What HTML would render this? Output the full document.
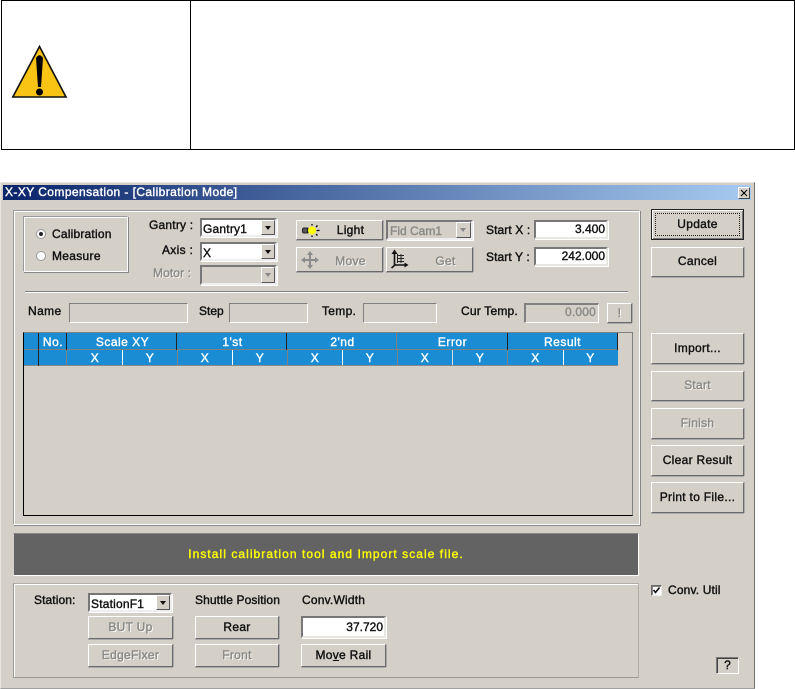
<!DOCTYPE html>
<html><head><meta charset="utf-8"><title>X-XY Compensation</title>
<style>
html,body{margin:0;padding:0;background:#fff;width:795px;height:689px;overflow:hidden}
body{position:relative;font:normal 12px "Liberation Sans",sans-serif;-webkit-text-stroke:.4px currentColor;color:#111}
div,span.a{position:absolute;box-sizing:border-box}
.t{white-space:nowrap;letter-spacing:.3px;line-height:14px;height:14px}
.d{color:#8a8a86;text-shadow:1px 1px 0 #fff}
.b{background:#d4d0c8;border:1px solid;border-color:#fff #6a6a6a #6a6a6a #fff;box-shadow:0 1px 0 #aaa,1px 0 0 #aaa;display:flex;align-items:center;justify-content:center;letter-spacing:.3px;white-space:nowrap;padding-bottom:1px}
.s{background:#d4d0c8;border:1px solid;border-color:#808080 #fff #fff #808080}
.w{background:#fff;border:2px solid;border-color:#777 #e8e6e0 #e8e6e0 #777;box-shadow:1px 1px 0 #fff;text-align:right;padding-right:1px;line-height:15px;letter-spacing:0;color:#111}
.c{background:#fff;border:2px solid;border-color:#777 #eee #eee #777;box-shadow:1px 1px 0 #fff;line-height:18px;padding-left:1px;letter-spacing:.2px;white-space:nowrap}
.ar{right:0;top:0;bottom:0;width:14px;background:#d4d0c8;border:1px solid;border-color:#fff #555 #555 #fff}
.ar:after{content:"";position:absolute;left:3px;top:5px;border:3px solid transparent;border-top:4px solid #111;border-bottom:0}
.dis{background:#d4d0c8}
.dis .ar:after{border-top-color:#888}
.g{border:1px solid;border-color:#999 #fff #fff #999;box-shadow:inset 1px 1px 0 #fff,1px 1px 0 #888}
.h{background:#1a8cd4;color:#fff;display:flex;align-items:center;justify-content:center;letter-spacing:.5px;line-height:1}
.l{background:#808080}
</style></head><body>

<!-- top table -->
<div style="left:1px;top:0;width:794px;height:150px;border:1px solid #000"></div>
<div style="left:190px;top:0;width:1px;height:150px;background:#000"></div>
<svg style="position:absolute;left:11px;top:44px" width="58" height="55" viewBox="0 0 58 55">
<path d="M28.5 2.5 L1.8 53 H55 Z" fill="#fac414" stroke="#111" stroke-width="1.6" stroke-linejoin="miter"/>
<path d="M25 14 Q28.5 8.5 32 14 L30 43 H27 Z" fill="#000"/>
<circle cx="28.5" cy="48" r="3.5" fill="#000"/>
</svg>

<!-- window -->
<div style="left:0;top:182px;width:755px;height:507px;background:#d4d0c8;border:1px solid;border-color:#e6e4de #707070 #a0a0a0 #e6e4de"></div>
<div style="left:3px;top:185px;width:748px;height:15px;background:linear-gradient(90deg,#0a246a 0%,#a6caf0 100%)"></div>
<div class="t" style="left:5px;top:185px;color:#fff;letter-spacing:.42px">X-XY Compensation - [Calibration Mode]</div>
<div class="b" style="left:738px;top:187px;width:12px;height:12px;color:#000;line-height:1;border-color:#fff #444 #444 #fff;box-shadow:none;padding:0">
<svg width="8" height="8" viewBox="0 0 8 8"><path d="M1 1L7 7M7 1L1 7" stroke="#000" stroke-width="1.2"/></svg></div>

<!-- main group -->
<div class="g" style="left:13px;top:210px;width:627px;height:315px"></div>

<!-- radios group -->
<div class="g" style="left:23px;top:216px;width:105px;height:56px"></div>
<svg style="position:absolute;left:35px;top:228px" width="12" height="36" viewBox="0 0 12 36">
<circle cx="6" cy="6" r="4.5" fill="#fff" stroke="#999"/><circle cx="6" cy="6" r="2" fill="#222"/>
<circle cx="6" cy="28" r="4.5" fill="#fff" stroke="#999"/>
</svg>
<div class="t" style="left:52px;top:227px;letter-spacing:.2px">Calibration</div>
<div class="t" style="left:52px;top:249px;letter-spacing:.3px">Measure</div>

<div class="t" style="left:149px;top:218px;letter-spacing:.2px">Gantry :</div>
<div class="t" style="left:162px;top:243px">Axis :</div>
<div class="t d" style="left:153px;top:266px;letter-spacing:.1px">Motor :</div>

<div class="c" style="left:200px;top:218px;width:77px;height:19px">Gantry1<div class="ar"></div></div>
<div class="c" style="left:200px;top:242px;width:77px;height:19px">X<div class="ar"></div></div>
<div class="c dis" style="left:200px;top:265px;width:77px;height:20px"><div class="ar"></div></div>

<div class="b" style="left:296px;top:220px;width:87px;height:20px;padding:0 0 0 22px">Light</div>
<svg style="position:absolute;left:301px;top:224px" width="19" height="13" viewBox="0 0 19 13">
<rect x="1" y="3.5" width="7" height="6" rx="2" fill="#222"/>
<path d="M3 4.5v4M5 4.5v4" stroke="#bbb" stroke-width=".7"/>
<path d="M11 1.5v-1.5M15 3l1.5-1.5M15.5 6.5h3M15 10l1.5 1.5M11 11.5v1.5" stroke="#000" stroke-width="1.3"/>
<circle cx="11" cy="6.5" r="4" fill="#ff0"/>
</svg>
<div class="c dis" style="left:386px;top:220px;width:87px;height:20px;color:#8a8a86;letter-spacing:0;padding-left:2px">Fid Cam1<div class="ar" style="width:15px"></div></div>
<div class="b d" style="left:296px;top:247px;width:87px;height:25px;padding:2px 0 0 22px">Move</div>
<svg style="position:absolute;left:300px;top:250px" width="20" height="20" viewBox="0 0 20 20">
<path d="M10 1L7 5H9V9H5V7L1 10L5 13V11H9V15H7L10 19L13 15H11V11H15V13L19 10L15 7V9H11V5H13Z" fill="#8c8c8c"/>
</svg>
<div class="b d" style="left:386px;top:247px;width:87px;height:25px;padding:2px 0 0 32px">Get</div>
<svg style="position:absolute;left:390px;top:249px" width="20" height="21" viewBox="0 0 20 21">
<path d="M4.5 3V17M1.5 19L5 16H16" fill="none" stroke="#111" stroke-width="1.6"/>
<path d="M4.5 0.5L1.5 5H7.5ZM18.5 16L14.5 13.5V18.5Z" fill="#111"/>
<path d="M7 6.5H14M7 9.5H14M7 12.5H14M7.5 5V14M11 5V14" stroke="#222" stroke-width="1" fill="none"/>
</svg>

<div class="t" style="left:486px;top:223px;letter-spacing:.1px">Start X :</div>
<div class="t" style="left:486px;top:250px;letter-spacing:.1px">Start Y :</div>
<div class="w" style="left:534px;top:220px;width:74px;height:19px">3.400</div>
<div class="w" style="left:534px;top:247px;width:74px;height:19px">242.000</div>

<div style="left:25px;top:291px;width:603px;height:1px;background:#808080"></div>
<div style="left:25px;top:292px;width:603px;height:1px;background:#fff"></div>

<div class="t" style="left:28px;top:304px;letter-spacing:.4px">Name</div>
<div class="s" style="left:69px;top:303px;width:119px;height:20px"></div>
<div class="t" style="left:199px;top:304px;letter-spacing:0">Step</div>
<div class="s" style="left:229px;top:303px;width:79px;height:20px"></div>
<div class="t" style="left:322px;top:304px">Temp.</div>
<div class="s" style="left:363px;top:303px;width:74px;height:20px"></div>
<div class="t" style="left:461px;top:304px;letter-spacing:.2px">Cur Temp.</div>
<div class="s" style="left:524px;top:303px;width:75px;height:20px;border-width:2px 1px 1px 2px;text-align:right;padding-right:2px;line-height:15px;color:#8a8a86;letter-spacing:.2px">0.000</div>
<div class="b d" style="left:607px;top:303px;width:25px;height:20px">!</div>

<!-- grid -->
<div style="left:23px;top:332px;width:610px;height:184px;border:1px solid;border-color:#808080 #808080 #000 #000;background:#d4d0c8"></div>
<div style="left:24px;top:333px;width:594px;height:33px;background:#1a8cd4;border-bottom:1px solid #8a8a8a"></div>
<div class="h" style="left:39px;top:333px;width:28px;height:17px">No.</div>
<div class="h" style="left:68px;top:333px;width:109px;height:17px">Scale XY</div>
<div class="h" style="left:178px;top:333px;width:109px;height:17px">1'st</div>
<div class="h" style="left:288px;top:333px;width:109px;height:17px">2'nd</div>
<div class="h" style="left:398px;top:333px;width:109px;height:17px">Error</div>
<div class="h" style="left:508px;top:333px;width:109px;height:17px">Result</div>
<div class="h" style="left:68px;top:350px;width:54px;height:15px">X</div>
<div class="h" style="left:123px;top:350px;width:54px;height:15px">Y</div>
<div class="h" style="left:178px;top:350px;width:54px;height:15px">X</div>
<div class="h" style="left:233px;top:350px;width:54px;height:15px">Y</div>
<div class="h" style="left:288px;top:350px;width:54px;height:15px">X</div>
<div class="h" style="left:343px;top:350px;width:54px;height:15px">Y</div>
<div class="h" style="left:398px;top:350px;width:54px;height:15px">X</div>
<div class="h" style="left:453px;top:350px;width:54px;height:15px">Y</div>
<div class="h" style="left:508px;top:350px;width:55px;height:15px">X</div>
<div class="h" style="left:564px;top:350px;width:53px;height:15px">Y</div>
<div class="l" style="left:24px;top:349px;width:594px;height:1px"></div>
<div style="left:38px;top:333px;width:1px;height:33px;background:#222"></div>
<div style="left:66px;top:333px;width:1px;height:17px;background:#222"></div>
<div class="l" style="left:66px;top:350px;width:1px;height:16px"></div>
<div style="left:176px;top:333px;width:1px;height:17px;background:#222"></div>
<div style="left:286px;top:333px;width:1px;height:17px;background:#222"></div>
<div class="l" style="left:396px;top:333px;width:1px;height:17px"></div>
<div style="left:507px;top:333px;width:1px;height:17px;background:#222"></div>
<div style="left:617px;top:333px;width:1px;height:17px;background:#222"></div>
<div style="left:122px;top:350px;width:1px;height:15px;background:#fff"></div>
<div class="l" style="left:177px;top:350px;width:1px;height:15px"></div>
<div style="left:232px;top:350px;width:1px;height:15px;background:#fff"></div>
<div class="l" style="left:287px;top:350px;width:1px;height:15px"></div>
<div style="left:342px;top:350px;width:1px;height:15px;background:#fff"></div>
<div class="l" style="left:397px;top:350px;width:1px;height:15px"></div>
<div style="left:452px;top:350px;width:1px;height:15px;background:#ddd"></div>
<div class="l" style="left:507px;top:350px;width:1px;height:15px"></div>
<div style="left:563px;top:350px;width:1px;height:15px;background:#fff"></div>

<!-- right buttons -->
<div class="b" style="left:651px;top:209px;width:93px;height:31px;padding-bottom:2px;border-color:#222;box-shadow:inset 1px 1px 0 #fff,inset -1px -1px 0 #777">Update<div style="left:3px;top:3px;right:3px;bottom:3px;border:1px dotted #222"></div></div>
<div class="b" style="left:651px;top:247px;width:93px;height:30px;padding-bottom:2px">Cancel</div>
<div class="b" style="left:651px;top:333px;width:93px;height:31px;padding-bottom:2px">Import...</div>
<div class="b d" style="left:651px;top:371px;width:93px;height:30px;padding-bottom:2px">Start</div>
<div class="b d" style="left:651px;top:408px;width:93px;height:31px;padding-bottom:2px">Finish</div>
<div class="b" style="left:651px;top:445px;width:93px;height:31px;padding-bottom:2px">Clear Result</div>
<div class="b" style="left:651px;top:482px;width:93px;height:31px;padding-bottom:2px">Print to File...</div>

<!-- status -->
<div style="left:13px;top:533px;width:626px;height:43px;background:#636363;border:1px solid;border-color:#888 #fff #fff #d4d0c8;display:flex;align-items:center;justify-content:center;color:#ff0;letter-spacing:1.05px;white-space:nowrap;padding-bottom:2px">Install calibration tool and Import scale file.</div>

<!-- bottom group -->
<div style="left:13px;top:583px;width:626px;height:95px;border:1px solid;border-color:#b0aea8 #b0aea8 #999 #999;box-shadow:inset 1px 1px 0 #fff"></div>
<div class="t" style="left:34px;top:593px;letter-spacing:.1px">Station:</div>
<div class="c" style="left:88px;top:593px;width:84px;height:19px;padding-left:1px">StationF1<div class="ar"></div></div>
<div class="b d" style="left:88px;top:616px;width:85px;height:23px">BUT Up</div>
<div class="b d" style="left:88px;top:644px;width:85px;height:23px">EdgeFixer</div>
<div class="t" style="left:195px;top:593px;letter-spacing:.1px">Shuttle Position</div>
<div class="b" style="left:195px;top:616px;width:84px;height:23px">Rear</div>
<div class="b d" style="left:195px;top:644px;width:84px;height:23px">Front</div>
<div class="t" style="left:302px;top:593px;letter-spacing:.2px">Conv.Width</div>
<div class="w" style="left:301px;top:616px;width:85px;height:22px;line-height:19px">37.720</div>
<div class="b" style="left:301px;top:644px;width:85px;height:23px">Mo<u>v</u>e Rail</div>

<div style="left:651px;top:585px;width:11px;height:11px;background:#fff;border:1px solid;border-color:#666 #eee #eee #666;box-shadow:inset 1px 1px 0 #888"></div>
<svg style="position:absolute;left:652px;top:586px" width="9" height="9" viewBox="0 0 9 9"><path d="M1.5 4L3.5 6.5L7.5 1.5" fill="none" stroke="#111" stroke-width="1.6"/></svg>
<div class="t" style="left:668px;top:583px;letter-spacing:.15px">Conv. Util</div>

<div style="left:716px;top:657px;width:23px;height:17px;background:#d4d0c8;border:1px solid;border-color:#777 #fff #fff #777;box-shadow:inset 1px 1px 0 #444;text-align:center;line-height:15px">?</div>

</body></html>
